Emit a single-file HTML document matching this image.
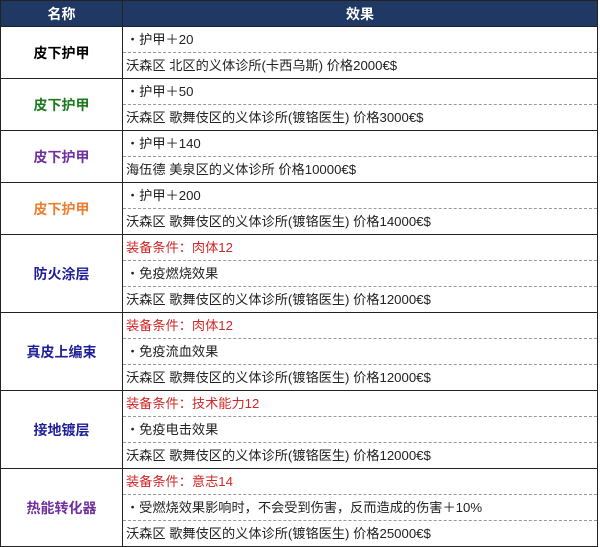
<!DOCTYPE html>
<html><head><meta charset="utf-8"><style>
body{margin:0;background:#fff;width:600px;height:547px;overflow:hidden;font-family:"Liberation Sans","Noto Sans CJK SC",sans-serif;}
table{border-collapse:collapse;position:absolute;left:0;top:0;width:598px;table-layout:fixed}
td,th{border:1px solid #222;padding:0;font-size:13.2px;}
th{background:#1f3864;color:#fff;height:25px;font-size:14px;font-weight:bold}
td.n{text-align:center;font-weight:bold;font-size:14px;width:121px}
td.e{padding:0}
td.e div{height:25px;line-height:25px;padding-left:3px;color:#222;white-space:nowrap;border-bottom:1px dashed #999}
td.e div:last-child{border-bottom:none;height:25px}
.r{color:#d02828 !important}
</style></head><body>
<table>
<tr><th style="width:121px">名称</th><th>效果</th></tr>
<tr><td class="n" style="color:#000">皮下护甲</td><td class="e"><div>・护甲＋20</div><div>沃森区 北区的义体诊所(卡西乌斯) 价格2000€$</div></td></tr>
<tr><td class="n" style="color:#1e7a1e">皮下护甲</td><td class="e"><div>・护甲＋50</div><div>沃森区 歌舞伎区的义体诊所(镀铬医生) 价格3000€$</div></td></tr>
<tr><td class="n" style="color:#7030a0">皮下护甲</td><td class="e"><div>・护甲＋140</div><div>海伍德 美泉区的义体诊所 价格10000€$</div></td></tr>
<tr><td class="n" style="color:#ed7d31">皮下护甲</td><td class="e"><div>・护甲＋200</div><div>沃森区 歌舞伎区的义体诊所(镀铬医生) 价格14000€$</div></td></tr>
<tr><td class="n" style="color:#1f1f9a">防火涂层</td><td class="e"><div class="r">装备条件：肉体12</div><div>・免疫燃烧效果</div><div>沃森区 歌舞伎区的义体诊所(镀铬医生) 价格12000€$</div></td></tr>
<tr><td class="n" style="color:#1f1f9a">真皮上编束</td><td class="e"><div class="r">装备条件：肉体12</div><div>・免疫流血效果</div><div>沃森区 歌舞伎区的义体诊所(镀铬医生) 价格12000€$</div></td></tr>
<tr><td class="n" style="color:#1f1f9a">接地镀层</td><td class="e"><div class="r">装备条件：技术能力12</div><div>・免疫电击效果</div><div>沃森区 歌舞伎区的义体诊所(镀铬医生) 价格12000€$</div></td></tr>
<tr><td class="n" style="color:#7030a0">热能转化器</td><td class="e"><div class="r">装备条件：意志14</div><div>・受燃烧效果影响时，不会受到伤害，反而造成的伤害＋10%</div><div>沃森区 歌舞伎区的义体诊所(镀铬医生) 价格25000€$</div></td></tr>
</table>
</body></html>
